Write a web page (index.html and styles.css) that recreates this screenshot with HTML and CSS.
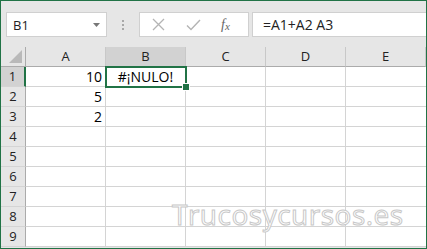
FILE: index.html
```html
<!DOCTYPE html>
<html lang="es">
<head>
<meta charset="utf-8">
<link rel="stylesheet" href="styles.css">
</head>
<body>
<div class="frame">
  <div class="toolbar">
    <div class="namebox">
      <span class="name">B1</span>
      <svg class="arrow" width="7" height="4" viewBox="0 0 7 4"><polygon points="0,0 7,0 3.5,4" fill="#777"/></svg>
    </div>
    <div class="dots"><i></i><i></i><i></i></div>
    <div class="btnbox">
      <svg class="ico" width="13" height="13" viewBox="0 0 13 13"><path d="M1 1 L12 12 M12 1 L1 12" stroke="#b4b4b4" stroke-width="1.3" fill="none"/></svg>
      <svg class="ico" width="15" height="12" viewBox="0 0 15 12"><path d="M1 6.5 L5 10.5 L14 1" stroke="#b4b4b4" stroke-width="1.4" fill="none"/></svg>
      <span class="fx">f<sub>x</sub></span>
    </div>
    <div class="formula">=A1+A2 A3</div>
  </div>
  <div class="sheet">
    <div class="corner"><svg width="13" height="13" viewBox="0 0 13 13"><polygon points="13,0 13,13 0,13" fill="#b9b9b9"/></svg></div>
    <div class="ch">A</div>
    <div class="ch active">B</div>
    <div class="ch">C</div>
    <div class="ch">D</div>
    <div class="ch last">E</div>

    <div class="rh active">1</div>
    <div class="c num">10</div>
    <div class="c center">#¡NULO!</div>
    <div class="c"></div><div class="c"></div><div class="c last"></div>

    <div class="rh">2</div>
    <div class="c num">5</div>
    <div class="c"></div><div class="c"></div><div class="c"></div><div class="c last"></div>

    <div class="rh">3</div>
    <div class="c num">2</div>
    <div class="c"></div><div class="c"></div><div class="c"></div><div class="c last"></div>

    <div class="rh">4</div>
    <div class="c"></div><div class="c"></div><div class="c"></div><div class="c"></div><div class="c last"></div>
    <div class="rh">5</div>
    <div class="c"></div><div class="c"></div><div class="c"></div><div class="c"></div><div class="c last"></div>
    <div class="rh">6</div>
    <div class="c"></div><div class="c"></div><div class="c"></div><div class="c"></div><div class="c last"></div>
    <div class="rh">7</div>
    <div class="c"></div><div class="c"></div><div class="c"></div><div class="c"></div><div class="c last"></div>
    <div class="rh">8</div>
    <div class="c"></div><div class="c"></div><div class="c"></div><div class="c"></div><div class="c last"></div>
    <div class="rh">9</div>
    <div class="c"></div><div class="c"></div><div class="c"></div><div class="c"></div><div class="c last"></div>

    <div class="selection"><div class="handle"></div></div>
    <div class="watermark">Trucosycursos.es</div>
  </div>
</div>
</body>
</html>
```

FILE: styles.css
```css
* { box-sizing: border-box; }
html, body { margin: 0; padding: 0; background: #fff; }
.frame {
  width: 427px;
  height: 249px;
  border: 1px solid #217346;
  background: #e6e6e6;
  overflow: hidden;
  font-family: "Open Sans", "Noto Sans", sans-serif;
}
.toolbar {
  height: 46px;
  display: flex;
  align-items: flex-start;
  padding: 11px 0 0 5px;
  background: #e6e6e6;
}
.namebox {
  width: 101px;
  height: 25px;
  background: #fff;
  border: 1px solid #d0d0d0;
  display: flex;
  align-items: center;
  justify-content: space-between;
  padding: 0 6px 0 6px;
}
.name { font-size: 13px; color: #222; }
.arrow { margin-top: 1px; }
.dots {
  width: 32px;
  height: 25px;
  display: flex;
  flex-direction: column;
  align-items: center;
  justify-content: center;
  gap: 2px;
}
.dots i { display: block; width: 2px; height: 2px; background: #a8a8a8; }
.btnbox {
  width: 110px;
  height: 25px;
  background: #fff;
  border: 1px solid #d0d0d0;
  display: flex;
  align-items: center;
  padding-left: 12px;
  gap: 21px;
}
.fx {
  font-family: "Liberation Serif", serif;
  font-style: italic;
  font-size: 14px;
  color: #666;
  margin-left: -1px;
}
.fx sub { font-size: 11px; vertical-align: -1px; }
.formula {
  flex: 1;
  height: 25px;
  margin-left: 3px;
  background: #fff;
  border: 1px solid #d0d0d0;
  border-right: none;
  font-size: 14px;
  line-height: 23px;
  padding-left: 10px;
  color: #222;
}
.sheet {
  position: relative;
  display: grid;
  grid-template-columns: 25px repeat(5, 80px);
  grid-template-rows: repeat(10, 20px);
  background: #fff;
}
.corner {
  background: #e6e6e6;
  border-right: 1px solid #ababab;
  border-bottom: 1px solid #ababab;
  display: flex;
  align-items: flex-end;
  justify-content: flex-end;
  padding: 0 3px 3px 0;
}
.corner svg { display: block; }
.ch {
  background: #e6e6e6;
  border-bottom: 1px solid #ababab;
  border-right: 1px solid #c8c8c8;
  text-align: center;
  font-size: 13px;
  line-height: 19px;
  color: #222;
}
.ch.active { background: #d2d2d2; }
.rh {
  background: #e6e6e6;
  border-right: 1px solid #ababab;
  border-bottom: 1px solid #d4d4d4;
  text-align: center;
  font-size: 13px;
  line-height: 19px;
  color: #222;
}
.rh.active { background: #d2d2d2; border-right: 2px solid #217346; }
.c {
  border-right: 1px solid #d4d4d4;
  border-bottom: 1px solid #d4d4d4;
  font-size: 14px;
  line-height: 19px;
  color: #000;
  padding: 0 3px;
}
.c.last { border-right: none; }
.num { text-align: right; }
.center { text-align: center; }
.selection {
  position: absolute;
  grid-row: 2 / 3;
  grid-column: 3 / 4;
  top: -1px;
  left: -1px;
  right: -1px;
  bottom: -1px;
  z-index: 3;
  border: 2px solid #217346;
  pointer-events: none;
}
.handle {
  position: absolute;
  right: -5px;
  bottom: -5px;
  width: 8px;
  height: 8px;
  background: #217346;
  border: 1px solid #fff;
}
.watermark {
  position: absolute;
  left: 171px;
  top: 148px;
  font-family: "Open Sans", sans-serif;
  font-size: 28px;
  letter-spacing: 0.5px;
  color: #fff;
  -webkit-text-stroke: 1px #c8c8c8;
  white-space: nowrap;
  pointer-events: none;
  z-index: 1;
}
```
